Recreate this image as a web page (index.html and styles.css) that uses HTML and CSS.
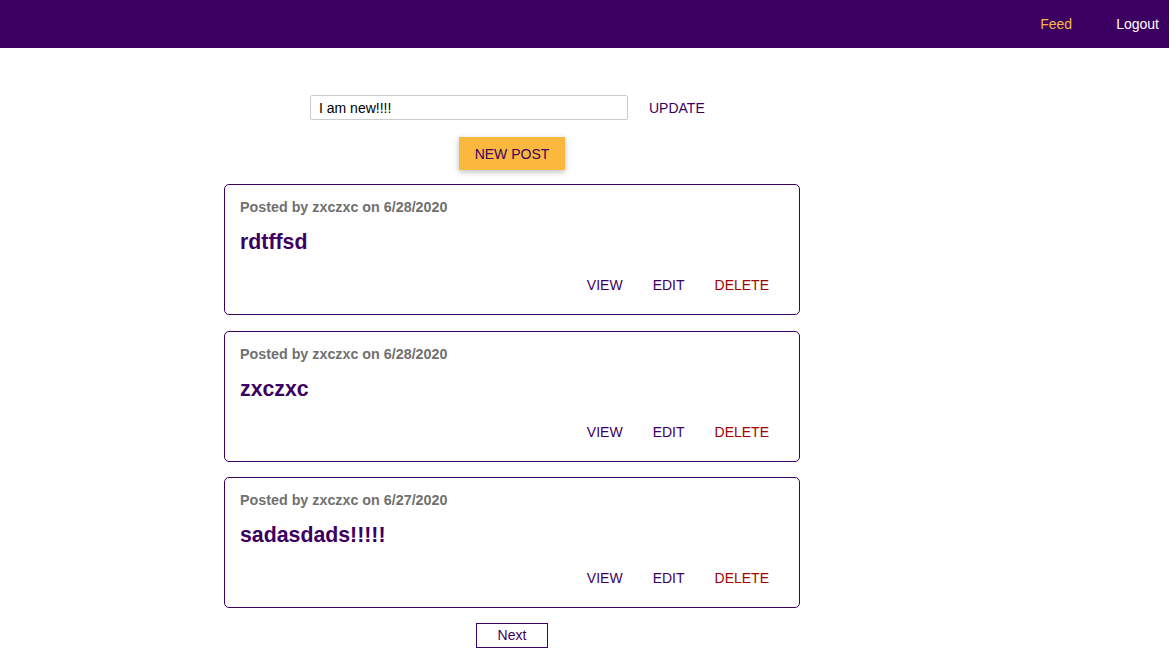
FILE: index.html
```html
<!DOCTYPE html>
<html>
<head>
<meta charset="utf-8">
<link rel="stylesheet" href="styles.css">
</head>
<body>
<header class="main-header">
  <nav class="nav">
    <a class="nav-link active" href="#">Feed</a>
    <a class="nav-link" href="#">Logout</a>
  </nav>
</header>
<main class="feed">
  <section class="status">
    <input class="status-input" type="text" value="I am new!!!!">
    <button class="btn flat">UPDATE</button>
  </section>
  <section class="control">
    <button class="btn raised accent">NEW POST</button>
  </section>
  <section class="posts">
    <article class="post">
      <header class="post-header">
        <h3 class="post-meta">Posted by zxczxc on 6/28/2020</h3>
        <h1 class="post-title">rdtffsd</h1>
      </header>
      <div class="post-actions">
        <button class="btn flat">VIEW</button>
        <button class="btn flat">EDIT</button>
        <button class="btn flat danger">DELETE</button>
      </div>
    </article>
    <article class="post">
      <header class="post-header">
        <h3 class="post-meta">Posted by zxczxc on 6/28/2020</h3>
        <h1 class="post-title">zxczxc</h1>
      </header>
      <div class="post-actions">
        <button class="btn flat">VIEW</button>
        <button class="btn flat">EDIT</button>
        <button class="btn flat danger">DELETE</button>
      </div>
    </article>
    <article class="post">
      <header class="post-header">
        <h3 class="post-meta">Posted by zxczxc on 6/27/2020</h3>
        <h1 class="post-title">sadasdads!!!!!</h1>
      </header>
      <div class="post-actions">
        <button class="btn flat">VIEW</button>
        <button class="btn flat">EDIT</button>
        <button class="btn flat danger">DELETE</button>
      </div>
    </article>
  </section>
  <div class="paginator">
    <button class="paginator-btn">Next</button>
  </div>
</main>
</body>
</html>
```

FILE: styles.css
```css
* { box-sizing: border-box; }
html, body {
  margin: 0;
  padding: 0;
  font-family: "Liberation Sans", Arial, sans-serif;
  background: #fff;
}
.main-header {
  height: 48px;
  background: #3b0062;
  display: flex;
  align-items: center;
  justify-content: flex-end;
  padding-right: 10px;
}
.nav {
  display: flex;
  gap: 44px;
}
.nav-link {
  color: #fff;
  text-decoration: none;
  font-size: 14px;
}
.nav-link.active { color: #fab83f; }

.feed {
  width: 576px;
  margin-left: 224px;
  padding-top: 47px;
}
.status {
  display: flex;
  align-items: center;
  margin-left: 86px;
  height: 25px;
}
.status-input {
  width: 318px;
  height: 25px;
  border: 1px solid #ccc;
  border-radius: 2px;
  padding: 0 8px;
  font-family: inherit;
  font-size: 14px;
  color: #000;
  outline: none;
}
.btn {
  font-family: inherit;
  font-size: 14px;
  border: none;
  background: transparent;
  cursor: pointer;
  color: #3b0062;
}
.status .btn {
  margin-left: 6px;
  padding: 0 15px;
  height: 25px;
}
.control {
  display: flex;
  justify-content: center;
  margin-top: 17px;
}
.btn.raised.accent {
  background: #fab83f;
  color: #3b0062;
  height: 33px;
  padding: 0 16px;
  box-shadow: 0 2px 6px rgba(0,0,0,0.26);
}
.posts {
  margin-top: 14px;
  display: flex;
  flex-direction: column;
  gap: 15.5px;
}
.post {
  border: 1px solid #3b0062;
  border-radius: 5px;
  padding: 15px;
  height: 131px;
}
.post-meta {
  margin: 0;
  font-size: 14.3px;
  line-height: 15px;
  font-weight: bold;
  color: #707070;
}
.post-title {
  margin: 15px 0 0;
  font-size: 21.3px;
  line-height: 24px;
  font-weight: bold;
  color: #3b0062;
}
.post-actions {
  display: flex;
  justify-content: flex-end;
  margin-top: 17px;
}
.post-actions .btn {
  height: 28px;
  padding: 0 15px;
}
.btn.danger { color: #a30000; }

.paginator {
  display: flex;
  justify-content: center;
  margin-top: 14.5px;
}
.paginator-btn {
  font-family: inherit;
  font-size: 14px;
  color: #3b0062;
  background: #fff;
  border: 1px solid #3b0062;
  width: 72px;
  height: 25px;
  padding: 0;
}
```
